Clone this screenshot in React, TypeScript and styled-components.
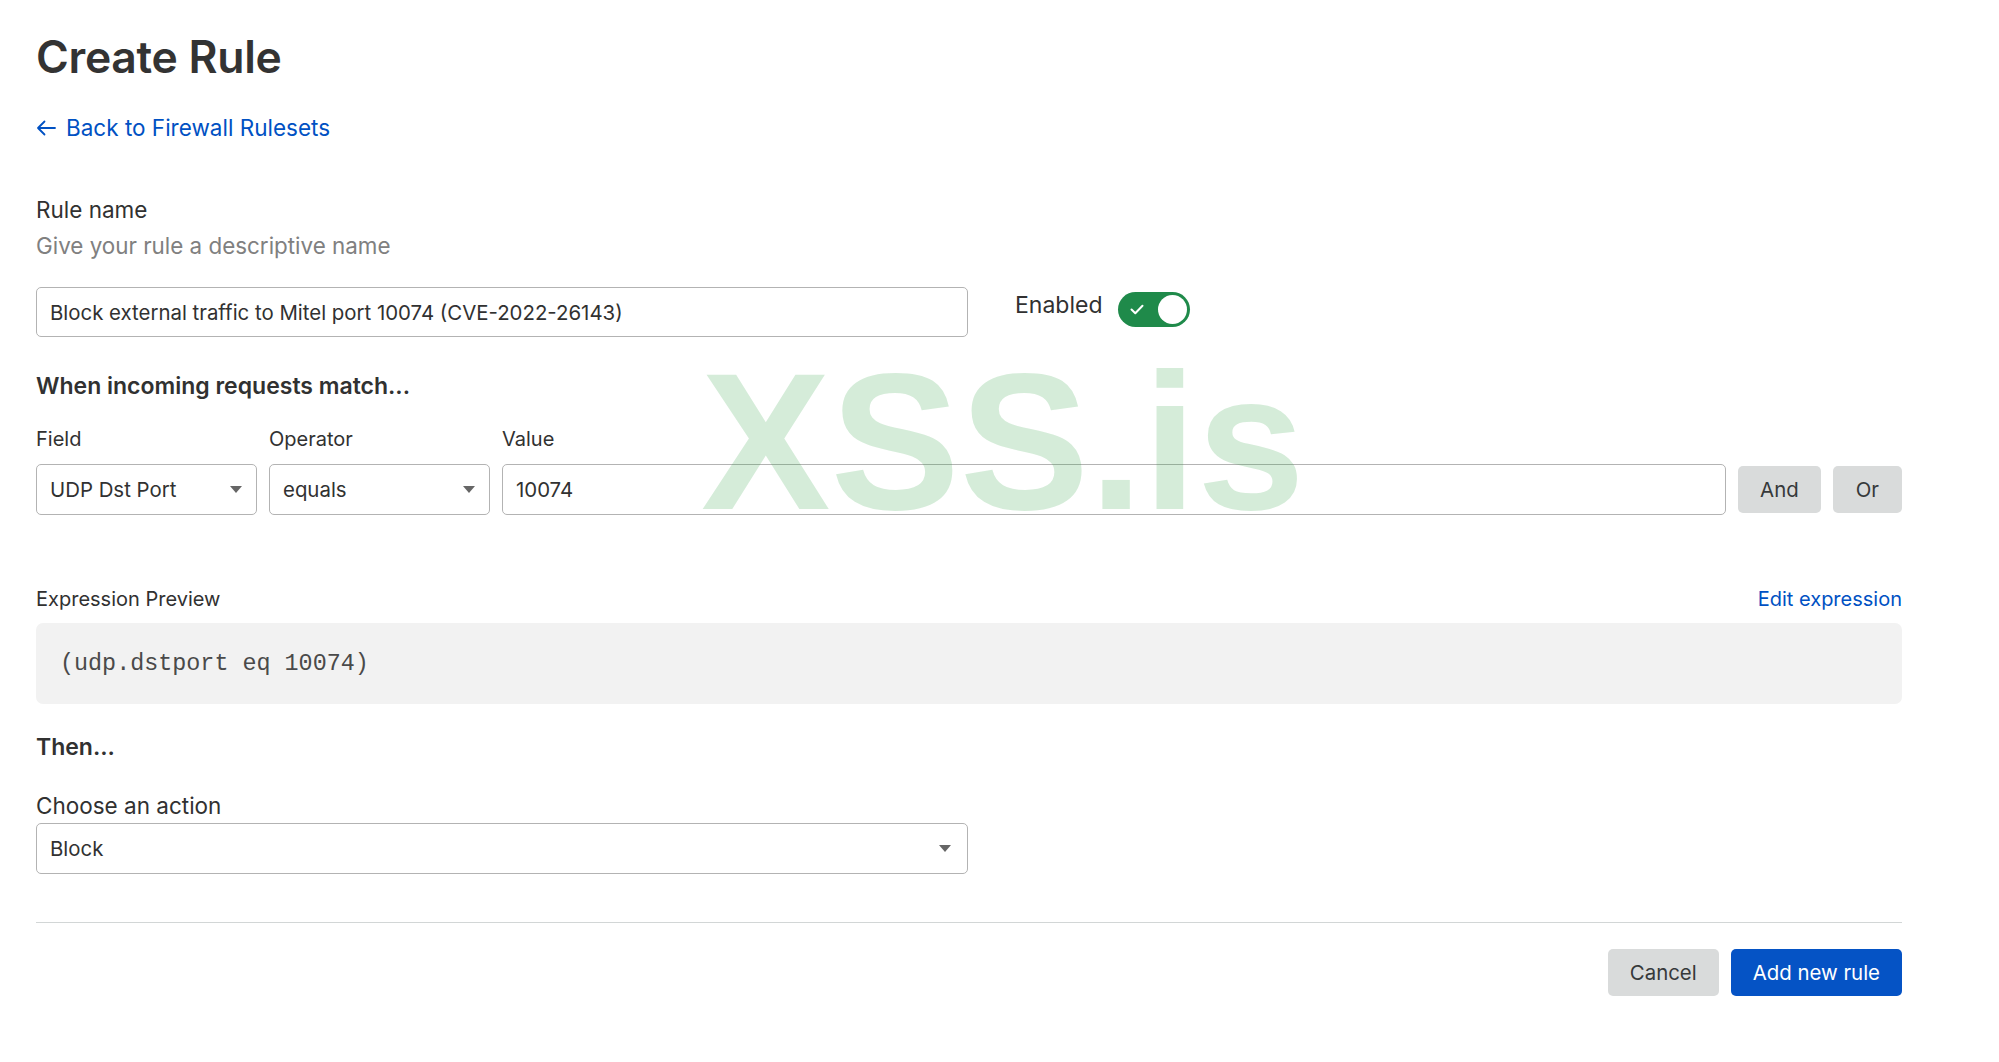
import * as React from 'react';
import styled, { createGlobalStyle } from 'styled-components';

const GlobalStyle = createGlobalStyle`
  body {
    margin: 0;
    background: #ffffff;
    font-family: Inter, "Noto Sans", sans-serif;
    color: #36393a;
  }
`;

const Page = styled.div`
  position: relative;
  width: 1866px;
  padding: 32px 0 40px 36px;
  display: flex;
  flex-direction: column;
`;

const Title = styled.h1`
  margin: 0;
  font-size: 44.5px;
  line-height: 50px;
  font-weight: 600;
  color: #333333;
  letter-spacing: -0.3px;
`;

const BackLink = styled.a`
  margin-top: 31px;
  display: flex;
  align-items: center;
  gap: 10px;
  font-size: 22.5px;
  line-height: 30px;
  color: #0051c3;
  text-decoration: none;
  cursor: pointer;
`;

const Label = styled.div<{ $gap?: number }>`
  margin-top: ${(p) => p.$gap ?? 0}px;
  font-size: 22.5px;
  line-height: 30px;
  color: #313131;
`;

const Help = styled.div`
  margin-top: 6px;
  font-size: 22.4px;
  line-height: 30px;
  color: #808080;
`;

const SectionTitle = styled.div<{ $gap: number }>`
  margin-top: ${(p) => p.$gap}px;
  font-size: 23px;
  line-height: 30px;
  font-weight: 600;
  color: #313131;
`;

const NameRow = styled.div`
  margin-top: 26px;
  display: flex;
  align-items: center;
  gap: 47px;
`;

const TextBox = styled.div<{ $width?: number; $grow?: boolean; $tall?: boolean }>`
  box-sizing: border-box;
  height: ${(p) => (p.$tall ? 51 : 50)}px;
  width: ${(p) => (p.$width ? `${p.$width}px` : 'auto')};
  flex: ${(p) => (p.$grow ? '1' : 'none')};
  border: 1px solid #b3b3b3;
  border-radius: 5px;
  padding: 0 13px;
  display: flex;
  align-items: center;
  font-size: 20.4px;
  color: #313131;
  background: #ffffff;
`;

const SelectBox = styled(TextBox)<{ $caretGap?: number }>`
  justify-content: space-between;
  padding-right: ${(p) => p.$caretGap ?? 14}px;
`;

const Caret = styled.span`
  width: 0;
  height: 0;
  border-left: 6px solid transparent;
  border-right: 6px solid transparent;
  border-top: 7px solid #666666;
`;

const ToggleWrap = styled.div`
  display: flex;
  align-items: center;
  gap: 16px;
  font-size: 23px;
  color: #313131;
  margin-top: -14px;
`;

const Toggle = styled.div<{ $on: boolean }>`
  position: relative;
  width: 72px;
  height: 35px;
  margin-top: 8px;
  border-radius: 18px;
  background: ${(p) => (p.$on ? '#1f8a4a' : '#b3b3b3')};
  display: flex;
  align-items: center;
  padding-left: 12px;
  box-sizing: border-box;
`;

const Knob = styled.span`
  position: absolute;
  right: 3px;
  top: 3px;
  width: 29px;
  height: 29px;
  border-radius: 50%;
  background: #ffffff;
`;

const ColumnLabels = styled.div`
  margin-top: 24px;
  display: flex;
  gap: 12px;
`;

const ColLabel = styled.div<{ $width?: number }>`
  width: ${(p) => (p.$width ? `${p.$width}px` : 'auto')};
  font-size: 20px;
  line-height: 28px;
  color: #313131;
`;

const MatchRow = styled.div`
  margin-top: 11px;
  display: flex;
  align-items: center;
  gap: 12px;
`;

const GrayButton = styled.button<{ $pad: number }>`
  height: 47px;
  padding: 0 ${(p) => p.$pad}px;
  border: none;
  border-radius: 5px;
  background: #d9dbdb;
  color: #36393a;
  font-family: inherit;
  font-size: 20.4px;
  cursor: pointer;
`;

const PrimaryButton = styled(GrayButton)`
  background: #0553c5;
  color: #ffffff;
`;

const PreviewHead = styled.div`
  margin-top: 70px;
  display: flex;
  justify-content: space-between;
  font-size: 20px;
  line-height: 28px;
  color: #313131;
`;

const EditLink = styled.a`
  color: #0051c3;
  cursor: pointer;
`;

const Preview = styled.pre`
  margin: 10px 0 0;
  height: 81px;
  box-sizing: border-box;
  padding: 0 24px;
  display: flex;
  align-items: center;
  background: #f2f2f2;
  border-radius: 7px;
  font-family: "Liberation Mono", "DejaVu Sans Mono", monospace;
  font-size: 23.4px;
  color: #4a4a4a;
`;

const Divider = styled.hr`
  margin: 48px 0 0;
  border: none;
  border-top: 1px solid #d2d6d6;
  width: 100%;
`;

const Footer = styled.div`
  margin-top: 26px;
  display: flex;
  justify-content: flex-end;
  gap: 12px;
`;

const Watermark = styled.div`
  position: absolute;
  left: 701px;
  top: 345px;
  font-family: "Liberation Sans", Arial, sans-serif;
  font-weight: 700;
  font-size: 194px;
  line-height: 1;
  color: rgba(46, 160, 67, 0.2);
  pointer-events: none;
  white-space: nowrap;
`;

const ArrowLeft = () => (
  <svg width="20" height="16" viewBox="0 0 20 16" fill="none">
    <path d="M19 8H2M8.5 1.5L2 8l6.5 6.5" stroke="#0051c3" strokeWidth="1.8" strokeLinecap="round" strokeLinejoin="round" />
  </svg>
);

const Check = () => (
  <svg width="14" height="11" viewBox="0 0 14 11" fill="none">
    <path d="M1.5 5.5l3.8 3.8L12.5 1.8" stroke="#ffffff" strokeWidth="2" strokeLinecap="round" strokeLinejoin="round" />
  </svg>
);

const App: React.FC = () => {
  return (
    <Page>
      <GlobalStyle />
      <Title>Create Rule</Title>
      <BackLink>
        <ArrowLeft />
        Back to Firewall Rulesets
      </BackLink>

      <Label $gap={52}>Rule name</Label>
      <Help>Give your rule a descriptive name</Help>
      <NameRow>
        <TextBox $width={932}>Block external traffic to Mitel port 10074 (CVE-2022-26143)</TextBox>
        <ToggleWrap>
          Enabled
          <Toggle $on>
            <Check />
            <Knob />
          </Toggle>
        </ToggleWrap>
      </NameRow>

      <SectionTitle $gap={34}>When incoming requests match...</SectionTitle>
      <ColumnLabels>
        <ColLabel $width={221}>Field</ColLabel>
        <ColLabel $width={221}>Operator</ColLabel>
        <ColLabel>Value</ColLabel>
      </ColumnLabels>
      <MatchRow>
        <SelectBox $width={221} $tall>
          UDP Dst Port
          <Caret />
        </SelectBox>
        <SelectBox $width={221} $tall>
          equals
          <Caret />
        </SelectBox>
        <TextBox $grow $tall>10074</TextBox>
        <GrayButton $pad={22}>And</GrayButton>
        <GrayButton $pad={23}>Or</GrayButton>
      </MatchRow>

      <PreviewHead>
        <span>Expression Preview</span>
        <EditLink>Edit expression</EditLink>
      </PreviewHead>
      <Preview>(udp.dstport eq 10074)</Preview>

      <SectionTitle $gap={28}>Then...</SectionTitle>
      <Label $gap={29}>Choose an action</Label>
      <SelectBox $width={932} $tall $caretGap={16} style={{ marginTop: 2 }}>
        Block
        <Caret />
      </SelectBox>

      <Divider />
      <Footer>
        <GrayButton $pad={22}>Cancel</GrayButton>
        <PrimaryButton $pad={22}>Add new rule</PrimaryButton>
      </Footer>

      <Watermark>XSS.is</Watermark>
    </Page>
  );
};

export default App;
